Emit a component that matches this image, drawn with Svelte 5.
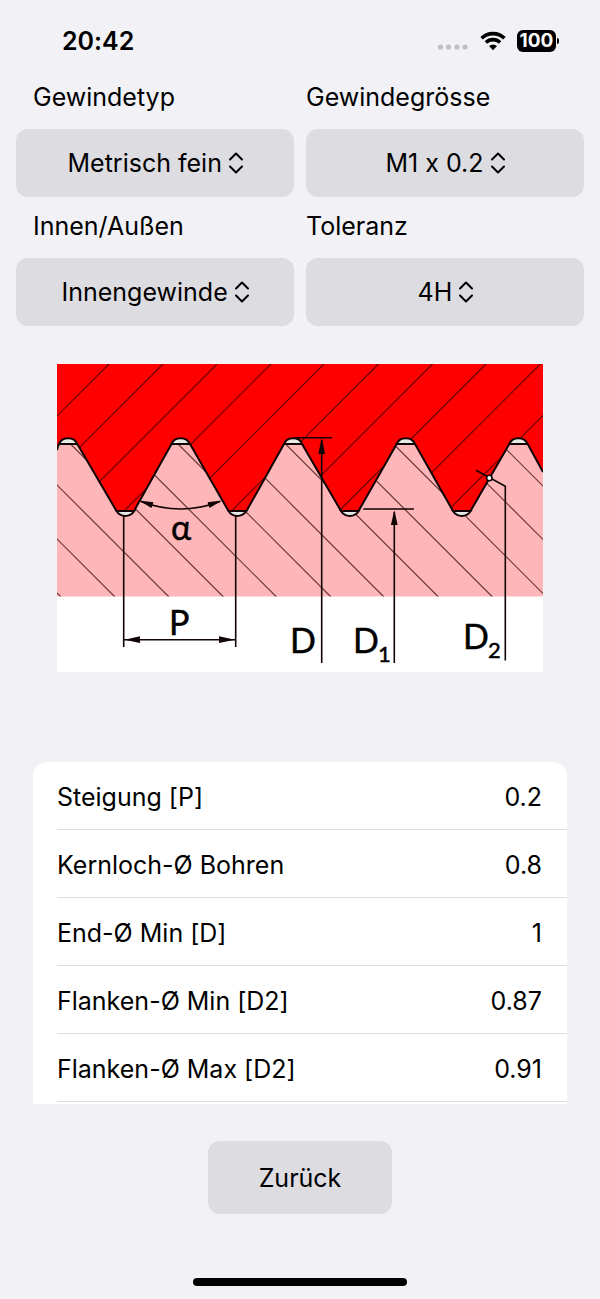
<script>
  const fields = [
    { id: 'type', label: 'Gewindetyp', value: 'Metrisch fein' },
    { id: 'size', label: 'Gewindegrösse', value: 'M1 x 0.2' },
    { id: 'side', label: 'Innen/Außen', value: 'Innengewinde' },
    { id: 'tolerance', label: 'Toleranz', value: '4H' }
  ];

  const rows = [
    ['Steigung [P]', '0.2'],
    ['Kernloch-Ø Bohren', '0.8'],
    ['End-Ø Min [D]', '1'],
    ['Flanken-Ø Min [D2]', '0.87'],
    ['Flanken-Ø Max [D2]', '0.91']
  ];

  // x + y of each hatch line in the nut, y - x of each one in the bolt
  const nutHatch = [52, 106, 160, 214, 267, 321.5, 375.5, 429, 483.5, 537.5];
  const boltHatch = [229, 175, 121, 66.5, 13.5, -41, -94, -148.5, -202.5, -256.5, -310.5, -364];

  // left end of each crest and each root
  const crests = [2, 114.5, 227, 339.7, 452.3];
  const roots = [59.5, 171.5, 284, 396];

  const profile =
    'M0 86 L2 80 H20.3 L59.5 147 H77 L114.5 80 H133 L171.5 147 H189.5 L227 80 H245 L284 147 H301.5 L339.7 80 H358 L396 147 H413.5 L452.3 80 H470.7 L486 108';
  const flanks =
    'M0 86 Q0.5 83 2 80 M20.3 80 L59.5 147 M77 147 L114.5 80 M133 80 L171.5 147 M189.5 147 L227 80 M245 80 L284 147 M301.5 147 L339.7 80 M358 80 L396 147 M413.5 147 L452.3 80 M470.7 80 L486 108';
</script>

<div class="screen">
  <header class="status">
    <time>20:42</time>
    <div class="indicators">
      <svg class="dots" viewBox="0 0 32 6" aria-hidden="true">
        <circle cx="3.5" cy="3" r="2.6" /><circle cx="11.5" cy="3" r="2.6" />
        <circle cx="20" cy="3" r="2.6" /><circle cx="28" cy="3" r="2.6" />
      </svg>
      <svg class="wifi" viewBox="0 0 26 20" aria-hidden="true">
        <path d="M1.6 7.2 A16.4 16.4 0 0 1 24.4 7.2" />
        <path d="M5.9 11.5 A10.2 10.2 0 0 1 20.1 11.5" />
        <path class="tip" d="M13 19.2 L9 15.1 Q13 11.9 17 15.1 Z" />
      </svg>
      <span class="battery">100</span>
    </div>
  </header>

  <main>
    <form class="fields">
      {#each fields as field}
        <div class="field">
          <label for={field.id}>{field.label}</label>
          <div class="picker">
            <select id={field.id}><option>{field.value}</option></select>
            <svg viewBox="0 0 14 22" aria-hidden="true"><path d="M1 7.5 L7 1.5 L13 7.5 M1 14.5 L7 20.5 L13 14.5" /></svg>
          </div>
        </div>
      {/each}
    </form>

    <svg class="diagram" viewBox="0 0 486 308" role="img">
      <defs>
        <clipPath id="nut"><path d="{profile} V0 H0 Z" /></clipPath>
        <clipPath id="bolt"><path d="{profile} V232.5 H0 Z" /></clipPath>
      </defs>
      <rect width="486" height="308" fill="#fff" />
      <path d="{profile} V232.5 H0 Z" fill="#ffb6b8" />
      <path d="{profile} V0 H0 Z" fill="#fe0000" />
      <g clip-path="url(#nut)" class="hatch nut">
        {#each nutHatch as s}<line x1={s} y1="0" x2={s - 160} y2="160" />{/each}
      </g>
      <g clip-path="url(#bolt)" class="hatch bolt">
        {#each boltHatch as d}<line x1={70 - d} y1="70" x2={233 - d} y2="233" />{/each}
      </g>
      <g class="edge">
        <path d={flanks} />
        {#each crests as x}
          <path class="gap" d="M{x} 80 C{x + 3} 72.3 {x + 15.2} 72.3 {x + 18.2} 80 Z" />
        {/each}
        {#each roots as x}
          <path class="gap" d="M{x} 147 C{x + 4} 153.6 {x + 13.7} 153.6 {x + 17.7} 147 Z" />
        {/each}
      </g>
      <g class="dimension">
        <path d="M84 137.5 Q123.5 152.5 163 137.5" />
        <path d="M66.7 151 V283 M178.7 151 V283 M67 275.7 H178.5" />
        <path d="M238 73.7 H275 M264.7 76 V299 M306.3 145 H357 M337.3 148 V299" />
        <path d="M419 106.3 L448.3 122.3 V296.5" />
        <circle cx="432.3" cy="114" r="2.7" />
      </g>
      <g class="arrowheads">
        <path d="M82 136.5 L96.5 138.2 L94.4 144 Z M165 136.5 L150.5 138.2 L152.6 144 Z" />
        <path d="M67.5 275.7 L83 272.3 V279.1 Z M178 275.7 L162 272.3 V279.1 Z" />
        <path d="M264.7 74 L261.3 90 H268.1 Z M337.3 146 L333.9 161 H340.7 Z" />
      </g>
      <g class="names">
        <text x="114" y="176">α</text>
        <text x="112" y="271">P</text>
        <text x="233" y="288.5">D</text>
        <text x="296" y="288.5">D</text>
        <text class="sub" x="321" y="298">1</text>
        <text x="406" y="284.5">D</text>
        <text class="sub" x="431" y="294">2</text>
      </g>
    </svg>

    <div class="results">
      <table>
        <tbody>
          {#each rows as [name, value]}
            <tr><th scope="row">{name}</th><td>{value}</td></tr>
          {/each}
        </tbody>
      </table>
    </div>

    <button type="button">Zurück</button>
  </main>

  <div class="home"></div>
</div>

<style>
  :global(body) {
    margin: 0;
    background: #f1f1f6;
  }
  .screen {
    box-sizing: border-box;
    min-height: 100vh;
    display: flex;
    flex-direction: column;
    font-family: Inter, 'Liberation Sans', sans-serif;
    font-size: 25px;
    font-feature-settings: 'calt' 0;
    line-height: 32px;
    color: #000;
  }
  .status {
    display: flex;
    justify-content: space-between;
    align-items: center;
    height: 81px;
    padding: 0 40px 0 62px;
  }
  time {
    font-weight: 600;
  }
  .indicators {
    display: flex;
    align-items: center;
    gap: 11px;
  }
  .dots {
    width: 32px;
    height: 6px;
    margin-top: 12px;
    fill: #bfbfc4;
  }
  .wifi {
    width: 26px;
    height: 20px;
    fill: none;
    stroke: #000;
    stroke-width: 3.6;
  }
  .wifi .tip {
    fill: #000;
    stroke: none;
  }
  .battery {
    position: relative;
    width: 39px;
    height: 22px;
    margin-right: 4px;
    border-radius: 6px;
    background: #000;
    color: #fff;
    font-size: 19px;
    font-weight: 700;
    line-height: 22px;
    text-align: center;
  }
  .battery::after {
    content: '';
    position: absolute;
    left: 40px;
    top: 8px;
    width: 2px;
    height: 6px;
    border-radius: 0 2px 2px 0;
    background: #000;
  }
  main {
    display: flex;
    flex-direction: column;
  }
  .fields {
    display: grid;
    grid-template-columns: 1fr 1fr;
    gap: 13px 12px;
    margin: 0 16px;
  }
  .field {
    display: flex;
    flex-direction: column;
    gap: 16px;
  }
  .field label {
    padding-left: 17px;
  }
  .field:nth-child(even) label {
    padding-left: 0;
  }
  .picker {
    display: flex;
    justify-content: center;
    align-items: center;
    gap: 6px;
    height: 68px;
    border-radius: 12px;
    background: #dddce1;
  }
  select {
    appearance: none;
    margin: 0;
    padding: 0;
    border: 0;
    background: transparent;
    font: inherit;
    font-feature-settings: inherit;
    color: inherit;
  }
  .picker svg {
    width: 14px;
    height: 22px;
    fill: none;
    stroke: #000;
    stroke-width: 2;
    stroke-linecap: round;
    stroke-linejoin: round;
  }
  .diagram {
    display: block;
    margin: 38px 57px 90px;
  }
  .hatch {
    stroke-width: 1.2;
  }
  .nut {
    stroke: #6b0000;
  }
  .bolt {
    stroke: #6a3838;
  }
  .edge {
    fill: none;
    stroke: #100404;
    stroke-width: 2;
  }
  .gap {
    fill: #e9ebe6;
  }
  .dimension {
    fill: none;
    stroke: #100404;
    stroke-width: 1.6;
  }
  .dimension circle {
    fill: #fff;
  }
  .arrowheads {
    fill: #100404;
  }
  .names {
    font-family: Lato, 'Open Sans', sans-serif;
    font-size: 34px;
    stroke: #000;
    stroke-width: 0.5;
  }
  .names .sub {
    font-size: 22px;
  }
  .results {
    margin: 0 33px;
    padding: 0 0 2px 24px;
    border-radius: 14px 14px 0 0;
    background: #fff;
  }
  table {
    width: 100%;
    border-collapse: separate;
    border-spacing: 0;
  }
  th,
  td {
    box-sizing: border-box;
    height: 68px;
    padding: 2px 0 0;
    border-bottom: 1px solid #dedee0;
    font-weight: 400;
    text-align: left;
  }
  td {
    padding-right: 25px;
    text-align: right;
  }
  button {
    align-self: center;
    width: 184px;
    height: 73px;
    margin: 37px 0 32px;
    padding: 0;
    border: 0;
    border-radius: 12px;
    background: #dddce1;
    font: inherit;
    color: inherit;
  }
  .home {
    width: 214px;
    height: 8px;
    margin: auto auto 13px;
    border-radius: 4px;
    background: #000;
  }
</style>
